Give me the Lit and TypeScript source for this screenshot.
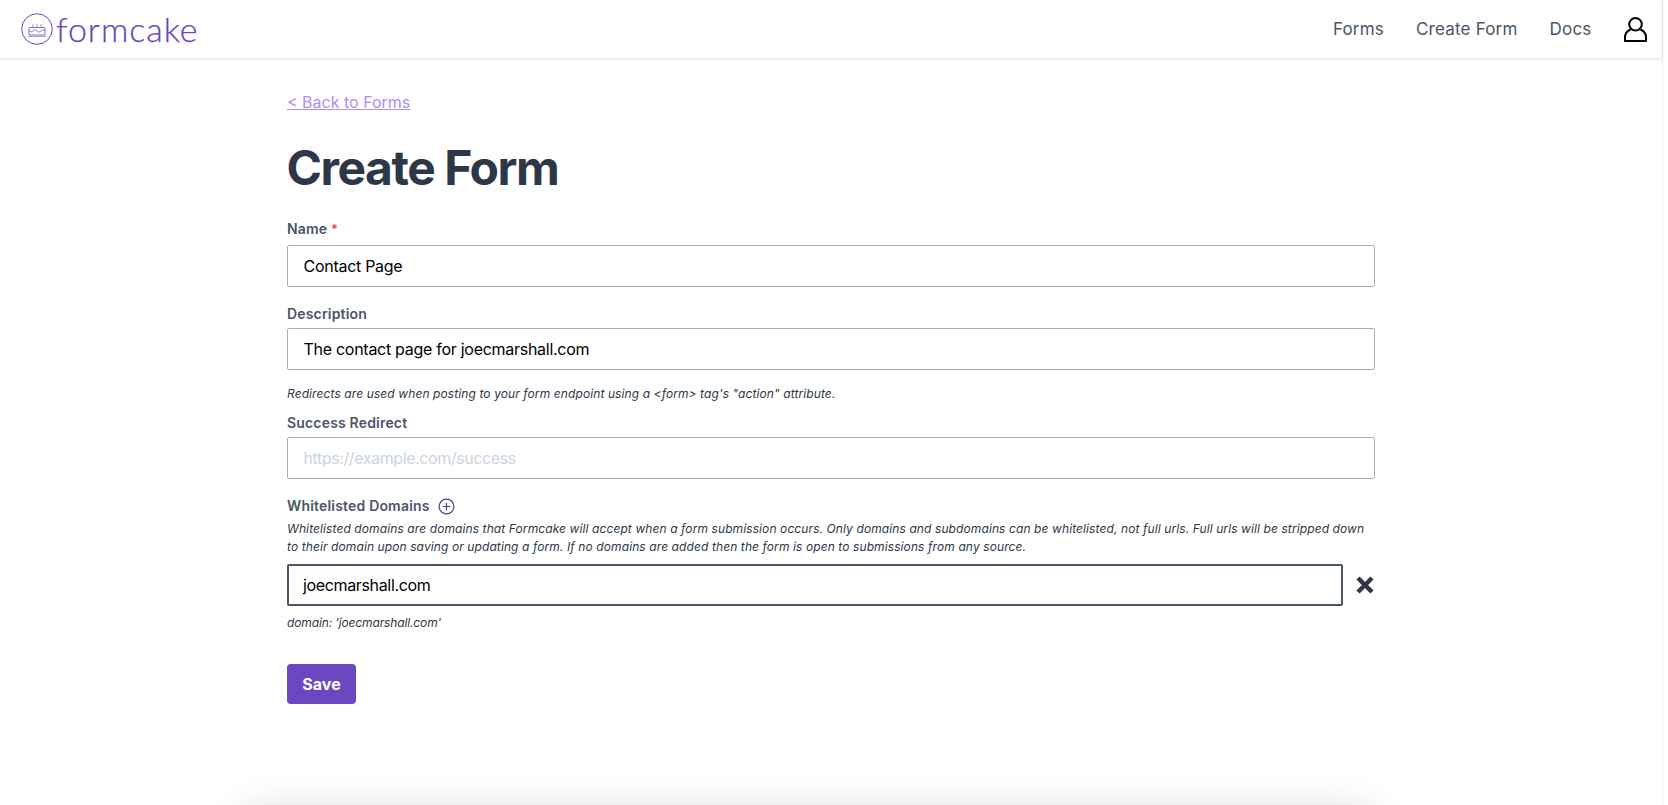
import { LitElement, html, css } from "lit";
import { customElement } from "lit/decorators.js";

@customElement("app-root")
export class AppRoot extends LitElement {
  static styles = css`
    :host { display: block; height: 805px; overflow: hidden; background: #fff; font-family: Inter, "Liberation Sans", sans-serif; color: #2d3748; }
    * { box-sizing: border-box; }
    .page { width: 1663px; height: 805px; border-right: 1px solid #f2f2f2; display: flex; flex-direction: column; }
    header { height: 58px; flex: none; display: flex; align-items: center; padding: 0 15.5px 0 21px; box-shadow: 0 1px 3px rgba(0,0,0,.14); }
    .logo { display: flex; align-items: center; gap: 3px; color: #6b46c1; text-decoration: none; }
    .logo svg { width: 32px; height: 32px; display: block; }
    .word { font-family: Lato, sans-serif; font-weight: 300; font-size: 34px; line-height: 40px; letter-spacing: 1px; -webkit-text-stroke: .25px #6b46c1; }
    nav { margin-left: auto; display: flex; align-items: center; gap: 32px; font-size: 17px; letter-spacing: .2px; color: #4a5568; }
    nav a { color: inherit; text-decoration: none; }
    .user { width: 23px; height: 25px; display: block; }
    main { width: 1088px; margin: 0 auto; padding-top: 34px; flex: none; }
    .back { display: block; font-size: 16px; line-height: 20px; color: #b08cf5; text-decoration: underline; }
    h1 { margin: 27px 0 0 -.5px; font-size: 48px; line-height: 58px; font-weight: 700; letter-spacing: -1.45px; color: #2d3748; }
    label, .lab { display: flex; align-items: center; font-size: 14px; font-weight: 600; line-height: 18px; letter-spacing: .18px; color: #4a5568; }
    .req { color: #e53e3e; margin-left: 4px; font-size: 12px; }
    .f1 { margin-top: 23px; }
    .f2 { margin-top: 18px; }
    .f3 { margin-top: 11px; }
    .box { display: block; margin-top: 7px; width: 100%; height: 42px; padding: 0 15.5px; border: 1px solid #a0aec0; border-radius: 2px; font: 400 16px/40px Inter, sans-serif; letter-spacing: -.28px; color: #000; background: #fff; }
    .tight { margin-top: 5px; }
    .box.ph { color: #cbd5e0; letter-spacing: -.4px; }
    .focus { border: 2px solid #4a5568; padding: 0 14px; margin-top: 0; flex: 1; letter-spacing: -.35px; line-height: 38px; }
    .help { margin: 0; font-size: 12px; font-style: italic; line-height: 18px; letter-spacing: .1px; color: #2d3748; }
    .note { margin-top: 15px; }
    .explain { margin-top: 5px; }
    .plus { width: 17px; height: 17px; margin-left: 8px; display: block; }
    .row { display: flex; align-items: center; margin-top: 8px; }
    .x { flex: none; width: 32px; display: flex; justify-content: flex-end; }
    .x svg { display: block; width: 20px; height: 20px; }
    .dom { margin-top: 8px; letter-spacing: -.13px; }
    button { display: block; margin-top: 32px; width: 69px; height: 40px; padding: 0; background: #6b46c1; color: #fff; border: 0; border-radius: 4px; font: 700 16px Inter, sans-serif; }
    footer { flex: none; margin: 109px 0 0 245px; width: 1125px; height: 60px; box-shadow: 0 0 40px rgba(0,0,0,.18); background: #fff; }
  `;
  render() {
    return html`<div class="page">
      <header>
        <a class="logo" href="#">
          <svg viewBox="0 0 32 32" fill="none" stroke="currentColor">
            <circle cx="16" cy="16" r="15.3" stroke-width="1"/>
            <path stroke-width=".8" d="M9 14.5h14a1 1 0 0 1 1 1V22H8v-6.5a1 1 0 0 1 1-1z"/>
            <path stroke-width=".7" d="M8 17.600c2 1.600 3 1.600 4 .4 1.400-1.400 2.600-1.400 4 0s2.600 1.400 4 0c1-1.200 2-1.200 4-.4"/>
            <path stroke-width="1" opacity=".55" d="M7 23.500h18M12 14v-3M16 14v-3M20 14v-3"/>
          </svg>
          <span class="word">formcake</span>
        </a>
        <nav>
          <a href="#">Forms</a><a href="#">Create Form</a><a href="#">Docs</a>
          <svg class="user" viewBox="0 0 23 25" fill="none" stroke="#000" stroke-width="2" stroke-linejoin="round">
            <circle cx="11.500" cy="7.300" r="6.300"/>
            <path d="M6.500 12.500C3 14 1 17 1 20.500V24h21v-3.500c0-3.500-2-6.500-5.500-8"/>
          </svg>
        </nav>
      </header>
      <main>
        <a class="back" href="#">&lt; Back to Forms</a>
        <h1>Create Form</h1>
        <div class="f1">
          <label>Name <span class="req">*</span></label>
          <div class="box">Contact Page</div>
        </div>
        <div class="f2">
          <label>Description</label>
          <div class="box tight">The contact page for joecmarshall.com</div>
        </div>
        <p class="help note">Redirects are used when posting to your form endpoint using a &lt;form&gt; tag's "action" attribute.</p>
        <div class="f3">
          <label>Success Redirect</label>
          <div class="box ph tight">https://example.com/success</div>
        </div>
        <div class="f2">
          <div class="lab">Whitelisted Domains
            <svg class="plus" viewBox="0 0 18 18" fill="none" stroke="#553c9a" stroke-width="1.3">
              <circle cx="9" cy="9" r="7.800"/><path d="M9 5v8M5 9h8"/>
            </svg>
          </div>
          <p class="help explain">Whitelisted domains are domains that Formcake will accept when a form submission occurs. Only domains and subdomains can be whitelisted, not full urls. Full urls will be stripped down to their domain upon saving or updating a form. If no domains are added then the form is open to submissions from any source.</p>
        </div>
        <div class="row">
          <div class="box focus">joecmarshall.com</div>
          <span class="x"><svg viewBox="0 0 20 20"><path d="M3 3l14 14M17 3L3 17" stroke="#2d3748" stroke-width="4.500" fill="none"/></svg></span>
        </div>
        <p class="help dom">domain: 'joecmarshall.com'</p>
        <button>Save</button>
      </main>
      <footer></footer>
    </div>`;
  }
}
